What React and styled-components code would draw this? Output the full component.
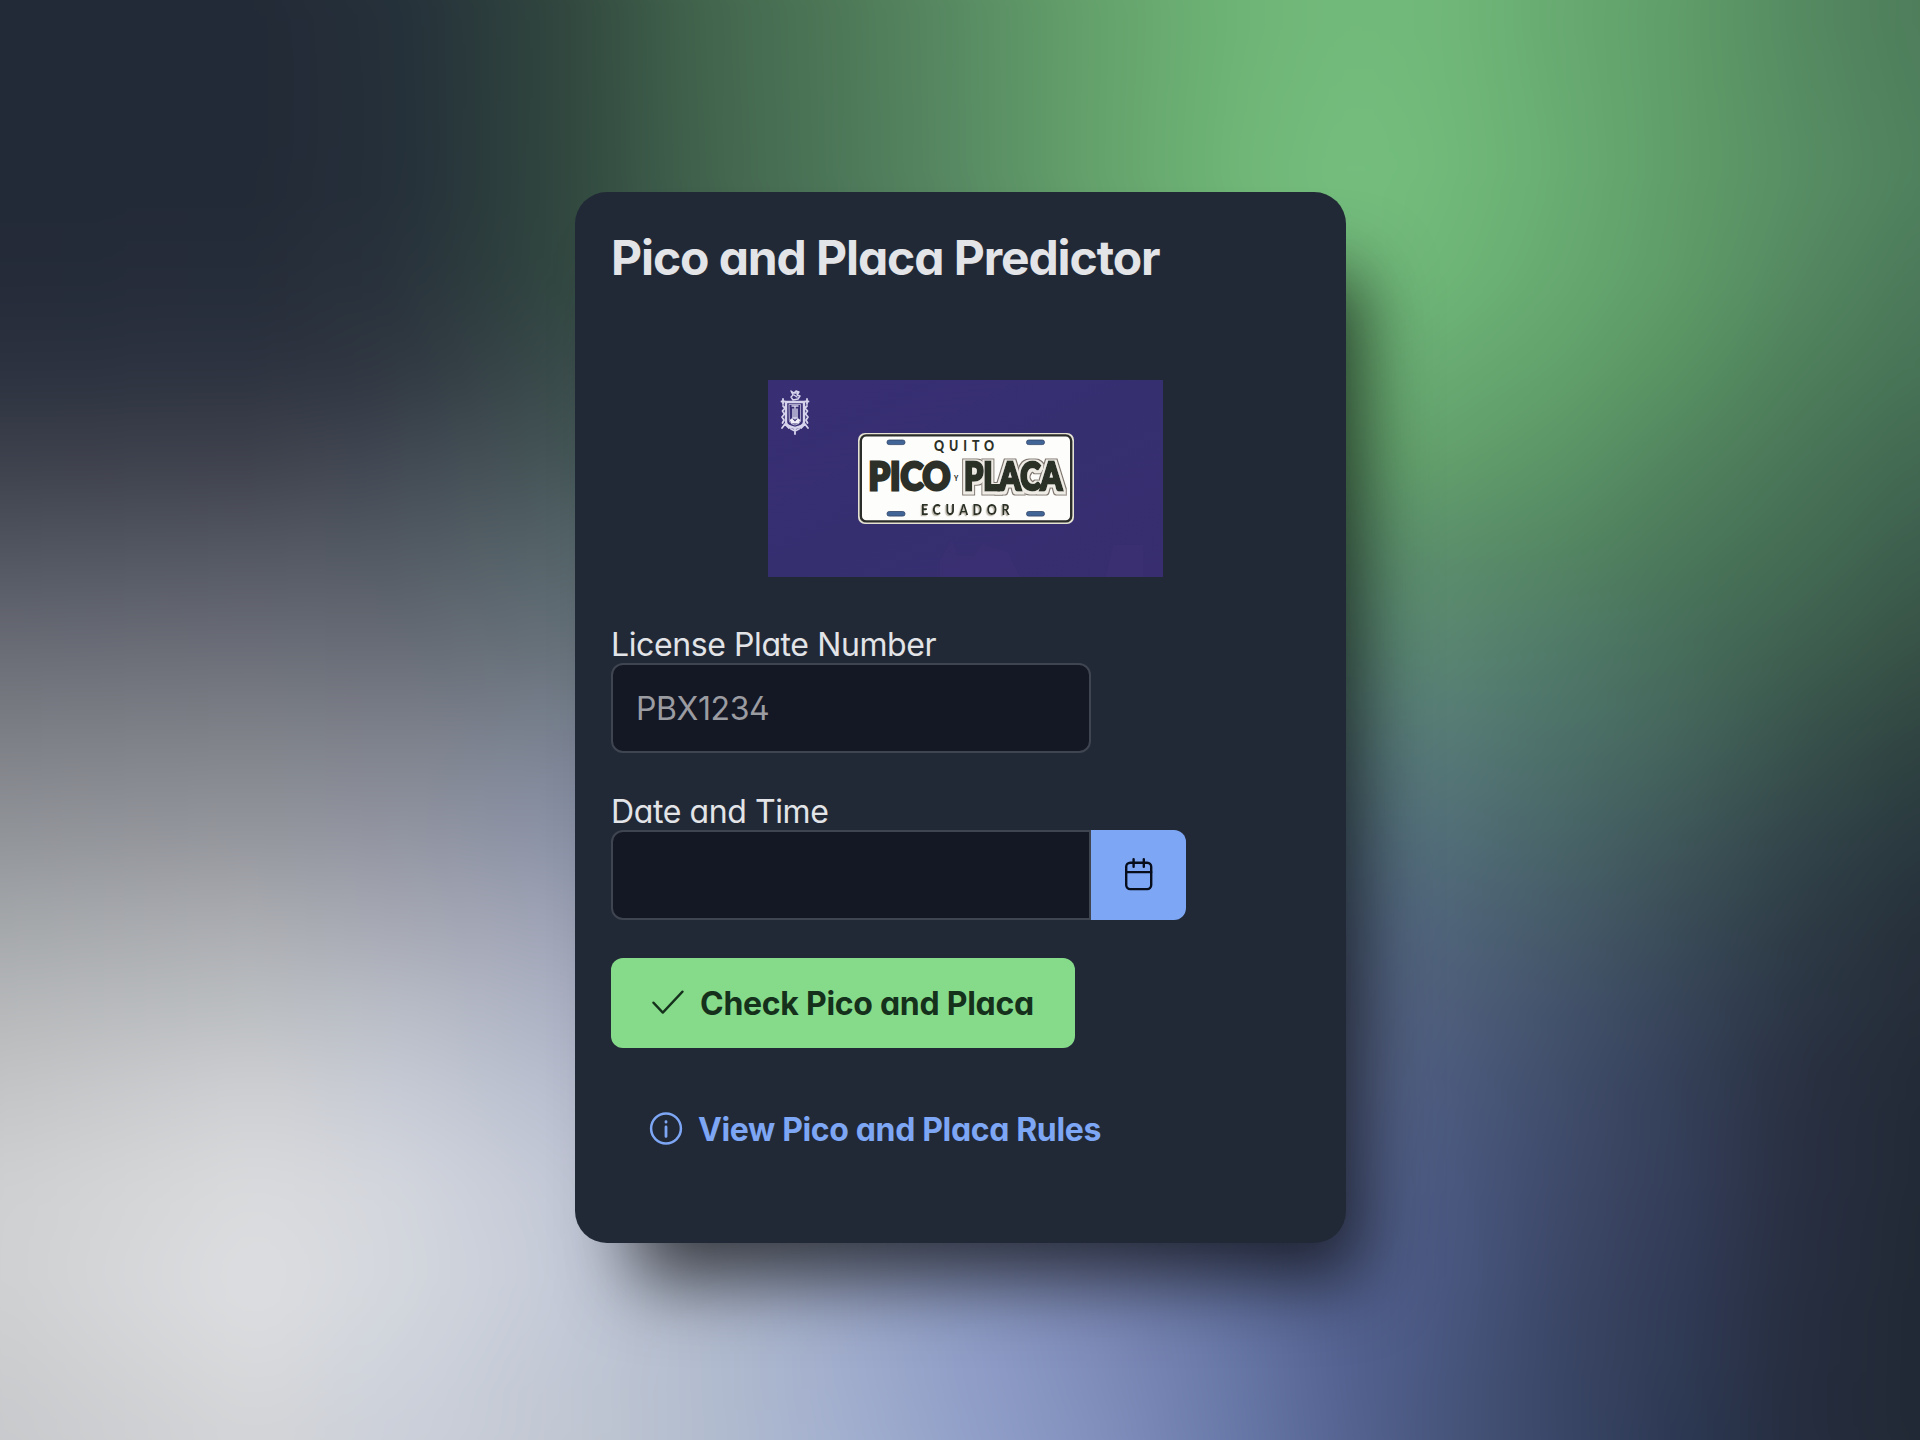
import React from "react";
import styled, { createGlobalStyle } from "styled-components";

const Global = createGlobalStyle`
  *, *::before, *::after { box-sizing: border-box; }
  body {
    margin: 0;
    background: #222936;
    font-family: Inter, "Liberation Sans", sans-serif;
    font-feature-settings: "cv02", "cv03", "cv04", "cv11";
  }
`;

/* Backdrop mesh: each row lists colours at the column stops; rows fade into one another. */
const BLEED = 90;
const COLS = [0, 250, 400, 570, 700, 830, 965, 1100, 1235, 1350, 1440, 1560, 1680, 1800, 1920];
const MESH = [
  { y: 0, c: ["#232a37", "#232a37", "#25313a", "#32483f", "#42654d", "#4d7757", "#598c63", "#65a36c", "#6eb476", "#72ba7b", "#70b879", "#68aa71", "#5f9d69", "#558a61", "#4e7d5b"] },
  { y: 180, c: ["#232a37", "#232a37", "#25303a", "#31483f", "#41634d", "#4c7658", "#588b63", "#65a36c", "#6fb677", "#75be7e", "#71ba7a", "#69ad73", "#609d69", "#588e64", "#4f815e"] },
  { y: 280, c: ["#252b39", "#262d3a", "#29333c", "#324841", "#42624f", "#4d7359", "#588762", "#64a06c", "#6fb376", "#74bc7c", "#6eb678", "#67a970", "#5e9b68", "#558861", "#4b795a"] },
  { y: 370, c: ["#2c3240", "#2d3340", "#313842", "#3a4c4b", "#446053", "#4e7060", "#578467", "#629a6c", "#6aa972", "#6db175", "#69ab73", "#62a16b", "#589262", "#4e7f5b", "#477356"] },
  { y: 460, c: ["#3d414c", "#3f424d", "#424954", "#455657", "#4d6664", "#517069", "#587f6d", "#5f926e", "#649f6f", "#66a570", "#63a06c", "#5b9567", "#52845f", "#4a7558", "#426852"] },
  { y: 550, c: ["#505560", "#545863", "#535a63", "#55656a", "#5c7072", "#5d7575", "#5c7a75", "#5e8872", "#5e8f6f", "#5e9470", "#5c8f6c", "#548662", "#4b785a", "#446c54", "#3c5e4d"] },
  { y: 640, c: ["#686b74", "#696c76", "#666b75", "#657078", "#6a7885", "#6a7a85", "#677d85", "#608380", "#5c857b", "#5b8975", "#5a8771", "#517b69", "#476e5b", "#3f6150", "#385247"] },
  { y: 730, c: ["#7c7e85", "#7e8188", "#7c808a", "#788190", "#77829a", "#738199", "#6c8093", "#627e8b", "#5b7d83", "#597d7c", "#587c77", "#4d7269", "#45665c", "#39534c", "#304541"] },
  { y: 830, c: ["#909398", "#93959c", "#9194a1", "#8a91a6", "#858ca9", "#7d87a5", "#7481a1", "#687a97", "#5c728b", "#557080", "#537079", "#496668", "#3f5759", "#33464a", "#2a393f"] },
  { y: 920, c: ["#a4a7aa", "#aaacb1", "#a5a8b3", "#9da2b5", "#949bb5", "#8a94b2", "#7d8aae", "#6e7ca3", "#5e6d90", "#546884", "#50657a", "#465b69", "#3a4c57", "#2e3c46", "#26303b"] },
  { y: 1010, c: ["#b6b8ba", "#bcbfc2", "#b9bdc7", "#acb1c4", "#a0a8c1", "#95a0bd", "#8793ba", "#7582ad", "#627097", "#556485", "#4f5f7c", "#43526b", "#374459", "#2b3544", "#252d39"] },
  { y: 1100, c: ["#c5c6c8", "#d0d1d4", "#c8ccd6", "#b9bfd0", "#aab3c9", "#9da9c7", "#8d9ac2", "#7b88b5", "#6675a0", "#57658b", "#4c5b7f", "#404d6b", "#343f58", "#293041", "#232a37"] },
  { y: 1190, c: ["#ced0d1", "#dadbdd", "#d3d6dd", "#c3c8d7", "#b0b9cd", "#a1adca", "#909dc5", "#7d8ab8", "#6776a4", "#55638c", "#4b5982", "#3f4a6a", "#343e59", "#292f42", "#222a36"] },
  { y: 1290, c: ["#cfd0d2", "#dddee1", "#d3d7dd", "#c4cad8", "#b3bccf", "#a2aecd", "#8f9dc6", "#7d8ab8", "#6675a5", "#536190", "#4a5882", "#3c4767", "#313b56", "#272e40", "#222935"] },
  { y: 1370, c: ["#cbccce", "#d8d9db", "#ced3dc", "#c1c7d4", "#b3bdcf", "#a3afcd", "#909ec8", "#7f8cba", "#6777a6", "#536190", "#48577f", "#3a4665", "#2f3a54", "#262d3f", "#222935"] },
  { y: 1440, c: ["#c8c9cc", "#d3d4d7", "#cbcfd9", "#c1c7d2", "#b3bdcf", "#a4b1cf", "#92a1c9", "#8190bd", "#6878a8", "#546390", "#48567d", "#394666", "#2c3853", "#252d3f", "#222935"] },
];

const Stage = styled.main`
  display: grid;
  width: 100%;
  height: 100vh;
  overflow: hidden;
`;

const Backdrop = styled.div`
  grid-area: 1 / 1;
  display: grid;
  margin: -${BLEED}px;
  filter: blur(24px);
`;

const MeshRow = styled.div`
  grid-area: 1 / 1;
  background: linear-gradient(90deg, ${(p) => p.$colors.map((c, i) => `${c} ${COLS[i] + BLEED}px`).join(", ")});
  mask-image: ${(p) =>
    p.$to === 0 ? "none" : `linear-gradient(180deg, transparent ${p.$from + BLEED}px, #000 ${p.$to + BLEED}px)`};
`;

const Card = styled.section`
  grid-area: 1 / 1;
  align-self: start;
  justify-self: start;
  z-index: 1;
  display: flex;
  flex-direction: column;
  align-items: flex-start;
  width: 771px;
  height: 1051px;
  margin: 192px 0 0 575px;
  padding: 36px;
  border-radius: 32px;
  background: #222936;
  box-shadow: 36px 60px 72px -22px rgba(0, 0, 0, 0.68);
`;

const Title = styled.h1`
  margin: 0;
  color: #e2e4e8;
  font-size: 48px;
  line-height: 60px;
  font-weight: 700;
  letter-spacing: -1.1px;
  white-space: nowrap;
`;

const Banner = styled.figure`
  display: flex;
  width: 395px;
  height: 197px;
  margin: 92px 0 0 157px;

  svg { display: block; }
`;

const Field = styled.div`
  display: flex;
  flex-direction: column;
  align-items: flex-start;
  margin-top: ${(p) => p.$gap}px;
`;

const Label = styled.label`
  color: #e2e4e8;
  font-size: 32px;
  line-height: 37px;
  letter-spacing: -0.4px;
  white-space: nowrap;
`;

const InputGroup = styled.div`
  display: flex;
`;

const Input = styled.input`
  width: 480px;
  height: 90px;
  padding: 0 23px;
  border: 2px solid #3f4551;
  border-radius: ${(p) => (p.$joined ? "12px 0 0 12px" : "12px")};
  outline: none;
  background: #141724;
  color: #e2e4e8;
  font: inherit;
  font-feature-settings: inherit;
  font-size: 32px;
  letter-spacing: -0.4px;

  &::placeholder { color: #9b9ca1; opacity: 1; }
`;

const IconButton = styled.button`
  display: flex;
  align-items: center;
  justify-content: center;
  width: 95px;
  height: 90px;
  padding: 0;
  border: 0;
  border-radius: 0 12px 12px 0;
  background: #7da6f5;
  color: #070d1b;
`;

const Button = styled.button`
  display: flex;
  align-items: center;
  gap: ${(p) => (p.$link ? 15 : 16)}px;
  height: 90px;
  margin-top: ${(p) => (p.$link ? 36 : 38)}px;
  padding: 0 ${(p) => (p.$link ? 38 : 41)}px;
  border: 0;
  border-radius: 12px;
  background: ${(p) => (p.$link ? "transparent" : "#86db8b")};
  color: ${(p) => (p.$link ? "#7da6f5" : "#15311c")};
  font: inherit;
  font-feature-settings: inherit;
  font-size: 32px;
  font-weight: 700;
  letter-spacing: ${(p) => (p.$link ? -0.36 : -0.28)}px;
  white-space: nowrap;
`;

const CheckIcon = () => (
  <svg width="32" height="32" viewBox="0 0 32 32" fill="none" stroke="currentColor" strokeWidth="2.3" strokeLinecap="round" strokeLinejoin="round">
    <path d="M1.4 15.6 L10.8 25.6 L30.5 4.6" />
  </svg>
);

const InfoIcon = () => (
  <svg width="34" height="34" viewBox="0 0 34 34" fill="none" stroke="currentColor" strokeWidth="2.5" strokeLinecap="round">
    <circle cx="17" cy="16.5" r="14.9" />
    <path d="M17 15 V24.4 M17 9.6 V10.2" strokeWidth="2.8" />
  </svg>
);

const CalendarIcon = () => (
  <svg width="32" height="34" viewBox="0 0 32 34" fill="none" stroke="currentColor" strokeWidth="2.4" strokeLinecap="round" strokeLinejoin="round">
    <rect x="3.2" y="4.7" width="25" height="26.4" rx="4" />
    <path d="M3.2 14.1 H28.2 M10.6 1.2 V8.8 M20.8 1.2 V8.8" />
  </svg>
);

const Crest = () => (
  <g transform="translate(13 10)" fill="none" stroke="#d6d4ec" strokeLinecap="round" strokeLinejoin="round">
    <path d="M10 1 L13 3 L15 1 L18 2 L16 5 L19 6 L17 9 L12 10 L10 7 L12 5 Z M13 5 L16 7 M12 3 L17 3" strokeWidth="1.4" />
    <path d="M5 12 H23 V32 Q23 36 14 38 Q5 36 5 32 Z" strokeWidth="2.4" />
    <path d="M8.4 14.4 H19.6 V31 Q19 34 14 35 Q9 34 8.4 31 Z" strokeWidth="0.8" />
    <path d="M2 9 V14 M0.5 11.5 H4 M26 9 V14 M24 11.5 H27.5 M2 16 L4 18 L1.5 21 L3.5 24 L1 27 L3 30 L1.5 33 M26 16 L24 18 L26.5 21 L24.5 24 L27 27 L25 30 L26.5 33 M1 38 L4 34 L8 38 L11 37 M27 38 L24 34 L20 38 L17 37 M14 38 V44 M10 39 L14 41 L18 39" strokeWidth="1.8" />
    <path d="M11 16 H17 M14 16 V29 M12 19 V27 M16 19 V27 M11.5 28 H16.5" strokeWidth="1.4" />
    <path d="M8.6 30 L11 28.2 L14 31.5 L17 28.2 L19.4 30 L17.5 33.5 H10.5 Z" fill="#f3f2fb" stroke="none" />
  </g>
);

const slots = [[119, 60], [258.5, 60], [119, 131.5], [258.5, 131.5]];

const PlateBanner = () => (
  <svg width="395" height="197" viewBox="0 0 395 197" fontFamily="Lato, sans-serif" fontWeight="900">
    <defs>
      <linearGradient id="violet" x1="0" y1="0" x2="1" y2="1">
        <stop offset="0" stopColor="#382e74" />
        <stop offset="0.5" stopColor="#352f70" />
        <stop offset="1" stopColor="#372d6f" />
      </linearGradient>
      <filter id="halo" x="-10%" y="-20%" width="120%" height="140%">
        <feMorphology in="SourceAlpha" operator="dilate" radius="2.6" result="wide" />
        <feOffset in="wide" dy="1.2" result="wideDown" />
        <feFlood floodColor="#80776f" />
        <feComposite in2="wideDown" operator="in" result="rim" />
        <feMorphology in="SourceAlpha" operator="dilate" radius="1.6" result="narrow" />
        <feOffset in="narrow" dy="0.9" result="narrowDown" />
        <feFlood floodColor="#efece6" />
        <feComposite in2="narrowDown" operator="in" result="gap" />
        <feMerge>
          <feMergeNode in="rim" />
          <feMergeNode in="gap" />
          <feMergeNode in="SourceGraphic" />
        </feMerge>
      </filter>
      <filter id="cast" x="-5%" y="-20%" width="110%" height="150%">
        <feDropShadow dx="-1.4" dy="1.2" stdDeviation="0.2" floodColor="#bdb8ac" />
      </filter>
    </defs>
    <rect width="395" height="197" fill="url(#violet)" />
    <path d="M172 197 V180 L184 160 L190 176 H206 L214 164 L240 172 L252 197 Z" fill="#45357c" opacity="0.2" />
    <path d="M345 165 H375 V197 H338 Z" fill="#45357c" opacity="0.2" />
    <Crest />
    <rect x="90" y="53" width="216" height="91" rx="7" fill="#e5e2d3" />
    <rect x="92.8" y="55.4" width="210.4" height="86" rx="5.5" fill="#fdfdfb" stroke="#2b2d2b" strokeWidth="2.4" />
    {slots.map(([x, y]) => (
      <rect key={`${x}-${y}`} x={x} y={y} width="18" height="4.6" rx="2.2" fill="#416596" stroke="#314568" strokeWidth="0.8" />
    ))}
    <g fill="#2c3028">
      <text transform="translate(166 70.8) scale(0.86 1)" fontSize="14.5" letterSpacing="5.7">QUITO</text>
      <g fontSize="38" strokeLinejoin="miter" stroke="#2c3028" strokeWidth="2.9">
        <text x="100.5" y="110.2" textLength="82" lengthAdjust="spacingAndGlyphs">PICO</text>
        <text x="196" y="110.2" textLength="98" lengthAdjust="spacingAndGlyphs" filter="url(#halo)">PLACA</text>
      </g>
      <text x="186" y="101" fontSize="6.5">Y</text>
      <text transform="translate(153 134.6) scale(0.86 1)" fontSize="14.5" letterSpacing="5.4" filter="url(#cast)">ECUADOR</text>
    </g>
  </svg>
);

export default function App() {
  return (
    <>
      <Global />
      <Stage>
        <Backdrop>
          {MESH.map((row, i) => (
            <MeshRow key={row.y} $colors={row.c} $from={i ? MESH[i - 1].y : 0} $to={row.y} />
          ))}
        </Backdrop>
        <Card>
          <Title>Pico and Placa Predictor</Title>
          <Banner><PlateBanner /></Banner>
          <Field $gap={49}>
            <Label htmlFor="plate">License Plate Number</Label>
            <Input id="plate" placeholder="PBX1234" />
          </Field>
          <Field $gap={40}>
            <Label htmlFor="when">Date and Time</Label>
            <InputGroup>
              <Input id="when" $joined />
              <IconButton aria-label="Choose date"><CalendarIcon /></IconButton>
            </InputGroup>
          </Field>
          <Button><CheckIcon />Check Pico and Placa</Button>
          <Button $link><InfoIcon />View Pico and Placa Rules</Button>
        </Card>
      </Stage>
    </>
  );
}
